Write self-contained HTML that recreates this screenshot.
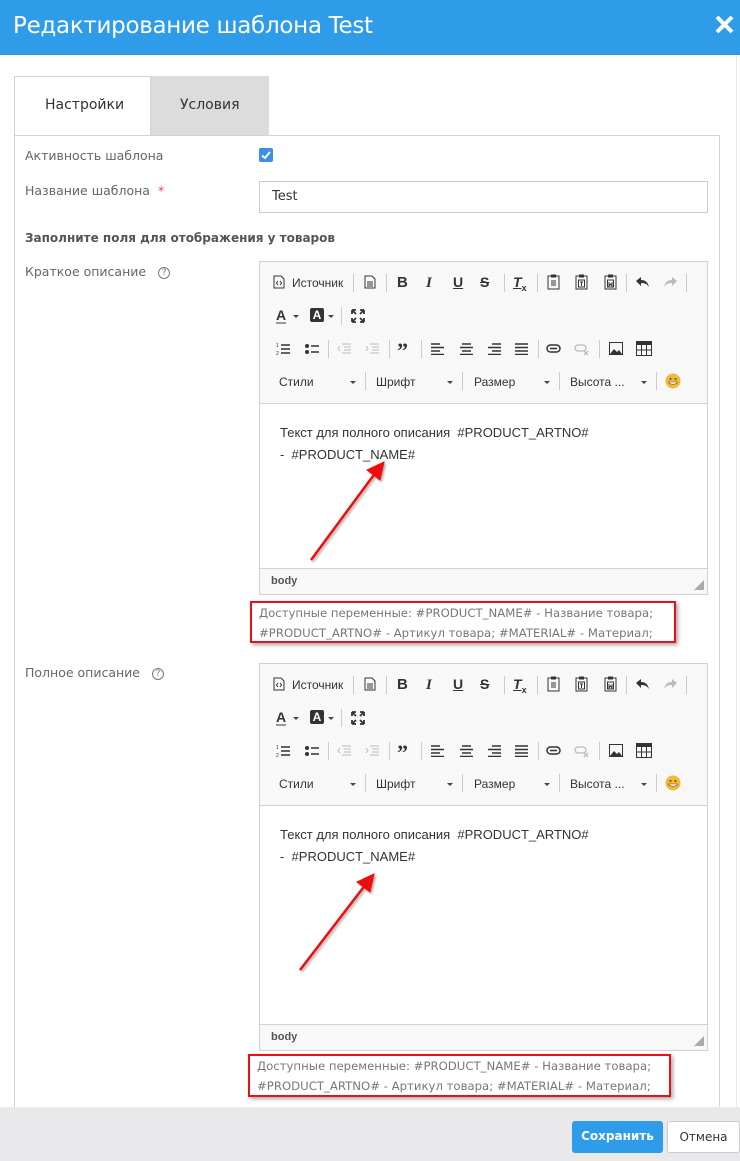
<!DOCTYPE html>
<html><head><meta charset="utf-8">
<style>
*{box-sizing:border-box;margin:0;padding:0}
body{width:740px;height:1161px;position:relative;overflow:hidden;background:#fff;font-family:"Liberation Sans","DejaVu Sans",sans-serif;}
.abs{position:absolute}
.hdr{left:0;top:0;width:740px;height:55px;background:#2e9ce9;color:#fff;font-family:"DejaVu Sans","Liberation Sans",sans-serif;font-size:23px;line-height:53px;padding-left:13px;letter-spacing:-0.3px}
.lbl{font-family:"DejaVu Sans","Liberation Sans",sans-serif;font-size:12.5px;color:#666}
.ed{position:absolute;left:259px;width:449px;border:1px solid #d1d1d1;background:#f8f8f8}
.tb{position:absolute;left:0;top:0;width:100%;}
.tb span{position:absolute;color:#333;font-size:13px;line-height:16px}
.sep{position:absolute;width:1px;height:18px;background:#ccc}
.cont{position:absolute;left:0;width:100%;background:#fff;border-top:1px solid #d1d1d1;border-bottom:1px solid #d1d1d1;font-family:"Liberation Sans",Arial,sans-serif;font-size:13px;color:#333;padding:17px 20px;line-height:22px}
.foot{position:absolute;left:11px;font-size:11px;font-weight:bold;color:#555}
.red{position:absolute;border:2px solid #e8101a;box-shadow:2px 2px 4px rgba(0,0,0,.35);font-family:"DejaVu Sans","Liberation Sans",sans-serif;font-size:11.7px;color:#777;line-height:20px;padding:0 0 0 7px;white-space:nowrap}
.q{display:inline-block;width:12px;height:12px;border:1px solid #777;border-radius:50%;font-size:9px;line-height:10px;text-align:center;color:#777;vertical-align:middle;margin-left:12px}
.dd{position:absolute;width:0;height:0;border-left:3px solid transparent;border-right:3px solid transparent;border-top:3px solid #444}
</style></head><body>
<div class="abs hdr">Редактирование шаблона Test</div>
<svg class="abs" style="left:715px;top:15px" width="19" height="19" viewBox="0 0 19 19"><path d="M2 2L17 17M17 2L2 17" stroke="#fff" stroke-width="4"/></svg>
<div class="abs" style="left:736px;top:55px;width:1px;height:1052px;background:#e8e8e8"></div>

<div class="abs" style="left:14px;top:76px;width:255px;height:60px;border:1px solid #d4d4d4;border-bottom:none"></div>
<div class="abs" style="left:150px;top:76px;width:119px;height:59px;background:#dcdcdd;border-left:1px solid #d4d4d4"></div>
<div class="abs lbl" style="left:45px;top:97px;font-size:14px;color:#333">Настройки</div>
<div class="abs lbl" style="left:180px;top:97px;font-size:14px;color:#333">Условия</div>
<div class="abs" style="left:14px;top:135px;width:706px;height:1000px;border:1px solid #d4d4d4"></div>

<div class="abs lbl" style="left:25px;top:148px">Активность шаблона</div>
<div class="abs" style="left:259px;top:148px;width:14px;height:14px;background:#3b8fe8;border-radius:2px"><svg width="14" height="14"><path d="M3 7.5L6 10L11 4" stroke="#fff" stroke-width="2" fill="none"/></svg></div>
<div class="abs lbl" style="left:25px;top:183px">Название шаблона <span style="color:#e44;margin-left:4px">*</span></div>
<div class="abs" style="left:259px;top:181px;width:449px;height:32px;border:1px solid #ccc;font-family:'DejaVu Sans',sans-serif;font-size:13px;color:#333;padding:7px 12px">Test</div>
<div class="abs lbl" style="left:25px;top:231px;font-weight:bold;color:#555;font-size:12px">Заполните поля для отображения у товаров</div>

<div class="abs lbl" style="left:25px;top:264px">Краткое описание<span class="q">?</span></div>
<div class="abs lbl" style="left:25px;top:665px">Полное описание<span class="q">?</span></div>

<div class="ed" style="top:261px;height:334px">
 <div class="tb" id="tb1">
  <svg class="abs" style="left:13px;top:13px" width="12" height="14"><path d="M1 1h7l3 3v9H1z" fill="none" stroke="#333"/><path d="M5 6L3.5 8L5 10M7 6L8.5 8L7 10" stroke="#333" fill="none"/></svg>
  <span style="left:32px;top:13px;font-size:12px">Источник</span>
  <div class="sep" style="left:93px;top:12px"></div>
  <svg class="abs" style="left:104px;top:13px" width="12" height="14"><path d="M1 1h7l3 3v9H1z" fill="none" stroke="#333"/><path d="M3 7h6M3 9h6M3 11h6" stroke="#333"/></svg>
  <div class="sep" style="left:126px;top:12px"></div>
  <span style="left:137px;top:13px;font-weight:bold;font-size:15px">B</span>
  <span style="left:166px;top:13px;font-weight:bold;font-style:italic;font-size:15px;font-family:'Liberation Serif',serif">I</span>
  <span style="left:193px;top:12px;font-weight:bold;font-size:14px;text-decoration:underline">U</span>
  <span style="left:220px;top:12px;font-weight:bold;font-size:14px;text-decoration:line-through">S</span>
  <div class="sep" style="left:244px;top:12px"></div>
  <span style="left:253px;top:12px;font-weight:bold;font-style:italic;font-size:14px;text-decoration:underline">T<sub style="font-size:9px;font-style:normal">x</sub></span>
  <div class="sep" style="left:277px;top:12px"></div>
  <svg class="abs" style="left:287px;top:12px" width="13" height="16"><rect x="1" y="2" width="11" height="13" fill="none" stroke="#333"/><rect x="4" y="0.5" width="5" height="3" fill="#333"/><path d="M4 7h5M4 9h5M4 11h5" stroke="#333"/></svg>
  <svg class="abs" style="left:315px;top:12px" width="13" height="16"><rect x="1" y="2" width="11" height="13" fill="none" stroke="#333"/><rect x="4" y="0.5" width="5" height="3" fill="#333"/><rect x="3.5" y="6" width="6" height="7" fill="none" stroke="#333"/><path d="M5 8h3M6.5 8v4" stroke="#333"/></svg>
  <svg class="abs" style="left:344px;top:12px" width="13" height="16"><rect x="1" y="2" width="11" height="13" fill="none" stroke="#333"/><rect x="4" y="0.5" width="5" height="3" fill="#333"/><rect x="3.5" y="6" width="6" height="7" fill="none" stroke="#333"/><path d="M5 8v4l1.5-2 1.5 2v-4" stroke="#333" fill="none"/></svg>
  <div class="sep" style="left:366px;top:12px"></div>
  <svg class="abs" style="left:375px;top:14px" width="15" height="12"><path d="M1 5L6 1v3c5 0 7 3 8 7-2-3-4-4-8-4v3z" fill="#333"/></svg>
  <svg class="abs" style="left:403px;top:14px" width="15" height="12"><path d="M14 5L9 1v3C4 4 2 7 1 11c2-3 4-4 8-4v3z" fill="#bbb"/></svg>
  <div class="sep" style="left:426px;top:12px"></div>
  <span style="left:16px;top:46px;font-weight:bold;font-size:14px;border-bottom:2px solid #999;line-height:14px">A</span><div class="dd" style="left:33px;top:53px"></div>
  <span style="left:50px;top:46px;background:#333;color:#fff;font-weight:bold;font-size:12px;width:14px;height:14px;text-align:center;line-height:14px;border-radius:2px">A</span><div class="dd" style="left:68px;top:53px"></div>
  <div class="sep" style="left:81px;top:45px"></div>
  <svg class="abs" style="left:91px;top:47px" width="14" height="14"><path d="M1 1l4 4M1 1h4M1 1v4M13 1l-4 4M13 1h-4M13 1v4M1 13l4-4M1 13h4M1 13v-4M13 13l-4-4M13 13h-4M13 13v-4" stroke="#333" stroke-width="1.8"/></svg>
  <svg class="abs" style="left:16px;top:80px" width="14" height="14"><path d="M5 3h9M5 7h9M5 11h9" stroke="#333" stroke-width="1.5"/><text x="0" y="5" font-size="5" fill="#333">1</text><text x="0" y="13" font-size="5" fill="#333">2</text></svg>
  <svg class="abs" style="left:45px;top:80px" width="14" height="14"><circle cx="2" cy="4" r="2" fill="#333"/><circle cx="2" cy="10" r="2" fill="#333"/><path d="M6 4h8M6 10h8" stroke="#333" stroke-width="1.5"/></svg>
  <div class="sep" style="left:68px;top:78px"></div>
  <svg class="abs" style="left:77px;top:80px" width="14" height="14"><path d="M5 2h9M7 5h7M7 8h7M5 11h9M3 4L1 6.5 3 9" stroke="#bbb" fill="none"/></svg>
  <svg class="abs" style="left:105px;top:80px" width="14" height="14"><path d="M5 2h9M7 5h7M7 8h7M5 11h9M1 4l2 2.5L1 9" stroke="#bbb" fill="none"/></svg>
  <div class="sep" style="left:129px;top:78px"></div>
  <span style="left:137px;top:78px;font-weight:bold;font-size:22px;font-family:'Liberation Serif',serif;line-height:22px">”</span>
  <div class="sep" style="left:161px;top:78px"></div>
  <svg class="abs" style="left:171px;top:81px" width="13" height="12"><path d="M0 1h9M0 4.5h13M0 8h9M0 11.5h13" stroke="#333" stroke-width="1.6"/></svg>
  <svg class="abs" style="left:200px;top:81px" width="13" height="12"><path d="M2 1h9M0 4.5h13M2 8h9M0 11.5h13" stroke="#333" stroke-width="1.6"/></svg>
  <svg class="abs" style="left:228px;top:81px" width="13" height="12"><path d="M4 1h9M0 4.5h13M4 8h9M0 11.5h13" stroke="#333" stroke-width="1.6"/></svg>
  <svg class="abs" style="left:255px;top:81px" width="13" height="12"><path d="M0 1h13M0 4.5h13M0 8h13M0 11.5h13" stroke="#333" stroke-width="1.6"/></svg>
  <div class="sep" style="left:278px;top:78px"></div>
  <svg class="abs" style="left:286px;top:82px" width="15" height="9"><rect x="1" y="1" width="13" height="7" rx="3.5" fill="none" stroke="#333" stroke-width="1.5"/><path d="M4 4.5h7" stroke="#333" stroke-width="1.5"/></svg>
  <svg class="abs" style="left:314px;top:82px" width="16" height="12"><rect x="1" y="1" width="11" height="6" rx="3" fill="none" stroke="#bbb" stroke-width="1.3"/><path d="M10 7l4 4M14 7l-4 4" stroke="#bbb" stroke-width="1.3"/></svg>
  <div class="sep" style="left:339px;top:78px"></div>
  <svg class="abs" style="left:349px;top:80px" width="14" height="13"><rect x="0.5" y="0.5" width="13" height="12" fill="none" stroke="#333"/><path d="M1 12l4-5 3 3 2-2 3 4z" fill="#333"/></svg>
  <svg class="abs" style="left:376px;top:79px" width="16" height="15"><rect x="0.5" y="0.5" width="15" height="14" fill="none" stroke="#333"/><rect x="0" y="0" width="16" height="4" fill="#333"/><path d="M0.5 9h15M5.5 0v15M10.5 0v15" stroke="#333"/></svg>
  <span style="left:19px;top:112px;font-size:12px">Стили</span><div class="dd" style="left:90px;top:119px"></div>
  <div class="sep" style="left:105px;top:110px"></div>
  <span style="left:116px;top:112px;font-size:12px">Шрифт</span><div class="dd" style="left:187px;top:119px"></div>
  <div class="sep" style="left:202px;top:110px"></div>
  <span style="left:214px;top:112px;font-size:12px">Размер</span><div class="dd" style="left:284px;top:119px"></div>
  <div class="sep" style="left:299px;top:110px"></div>
  <span style="left:310px;top:112px;font-size:12px">Высота ...</span><div class="dd" style="left:381px;top:119px"></div>
  <div class="sep" style="left:396px;top:110px"></div>
  <svg class="abs" style="left:405px;top:111px" width="16" height="16"><circle cx="8" cy="8" r="7.5" fill="#f0b93a"/><circle cx="5.5" cy="6" r="1" fill="#6b4a12"/><circle cx="10.5" cy="6" r="1" fill="#6b4a12"/><path d="M3.5 9h9c-1 3-8 3-9 0z" fill="#fff" stroke="#6b4a12" stroke-width=".6"/></svg>
 </div>
 <div class="cont" style="top:141px;height:166px;padding-top:18px">Текст для полного описания&nbsp; #PRODUCT_ARTNO#<br>-&nbsp; #PRODUCT_NAME#</div>
 <div class="foot" style="top:313px">body</div>
 <svg class="abs" style="right:3px;bottom:4px" width="10" height="10"><path d="M10 0V10H0z" fill="#aaa"/></svg>
</div>
<div class="red" style="left:250px;top:601px;width:426px;height:42px">Доступные переменные: #PRODUCT_NAME# - Название товара;<br>#PRODUCT_ARTNO# - Артикул товара; #MATERIAL# - Материал;</div>

<div class="ed" style="top:663px;height:388px" id="ed2"></div>
<div class="red" style="left:248px;top:1054px;width:423px;height:43px">Доступные переменные: #PRODUCT_NAME# - Название товара;<br>#PRODUCT_ARTNO# - Артикул товара; #MATERIAL# - Материал;</div>

<svg class="abs" style="left:0;top:0;pointer-events:none" width="740" height="1161">
<defs><filter id="sh"><feDropShadow dx="1.5" dy="1.5" stdDeviation="1.2" flood-opacity=".35"/></filter></defs>
<g filter="url(#sh)" fill="#ee1111" stroke="#ee1111">
<path d="M311 560L376 472" stroke-width="2.5"/><path d="M384 462L367 470L380 480z"/>
<path d="M300 970L366 884" stroke-width="2.5"/><path d="M374 874L357 882L370 892z"/>
</g></svg>

<div class="abs" style="left:0;top:1107px;width:740px;height:54px;background:#e9e9eb"></div>
<div class="abs" style="left:572px;top:1121px;width:91px;height:32px;background:#2e9ce9;border-radius:3px;color:#fff;font-family:'DejaVu Sans',sans-serif;font-weight:bold;font-size:12px;text-align:center;line-height:31px">Сохранить</div>
<div class="abs" style="left:667px;top:1121px;width:73px;height:32px;background:#fff;border:1px solid #ccc;border-radius:3px;color:#333;font-family:'DejaVu Sans',sans-serif;font-size:12px;text-align:center;line-height:30px">Отмена</div>

<script>
var t=document.getElementById('tb1').outerHTML.replace('id="tb1"','');
document.getElementById('ed2').innerHTML=t+'<div class="cont" style="top:141px;height:220px;padding-top:18px">Текст для полного описания&nbsp; #PRODUCT_ARTNO#<br>-&nbsp; #PRODUCT_NAME#</div><div class="foot" style="top:367px">body</div><svg class="abs" style="right:3px;bottom:4px" width="10" height="10"><path d="M10 0V10H0z" fill="#aaa"/></svg>';
</script>
</body></html>
